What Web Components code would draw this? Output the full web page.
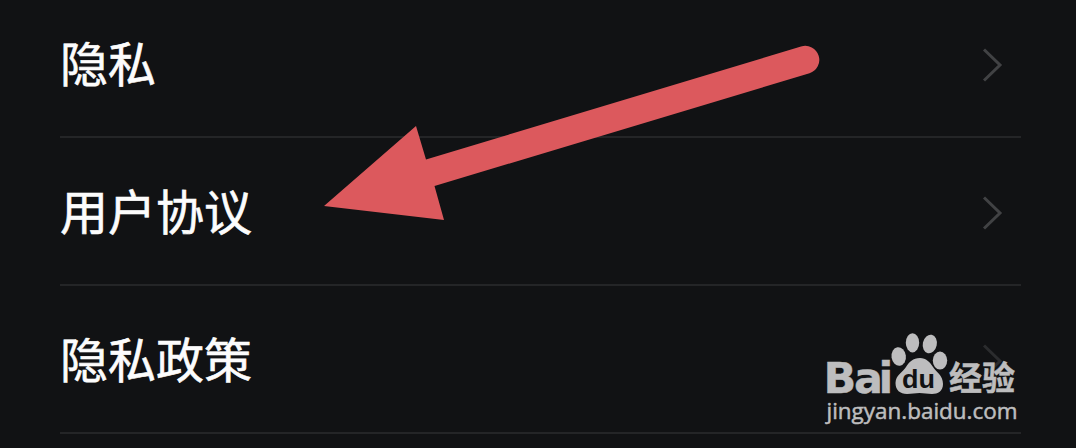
<!DOCTYPE html>
<html lang="zh-CN">
<head>
<meta charset="UTF-8">
<title>设置</title>
<style>
  body {
    margin: 0;
    background: #111214;
    overflow: hidden;
  }
</style>
</head>
<body>
<settings-page>
  <settings-row>隐私</settings-row>
  <settings-row>用户协议</settings-row>
  <settings-row class="covered">隐私政策</settings-row>
  <pointer-arrow slot="overlay"></pointer-arrow>
  <baidu-watermark slot="overlay"></baidu-watermark>
</settings-page>

<script>
class SettingsPage extends HTMLElement {
  connectedCallback() {
    this.attachShadow({ mode: 'open' });
    this.shadowRoot.innerHTML = `
      <style>
        :host {
          display: block;
          position: relative;
          box-sizing: border-box;
          width: 1076px;
          height: 448px;
          padding: 0 55px 0 60px;
          overflow: hidden;
          background: #111214;
          color: #fcfcfc;
          font-family: "Noto Sans CJK SC", sans-serif;
        }

        /* the list is scrolled a little past its first row's top */
        .list {
          display: flex;
          flex-direction: column;
          margin-top: -10px;
        }
      </style>
      <div class="list"><slot></slot></div>
      <slot name="overlay"></slot>
    `;
  }
}

class SettingsRow extends HTMLElement {
  connectedCallback() {
    this.attachShadow({ mode: 'open' });
    this.shadowRoot.innerHTML = `
      <style>
        :host {
          display: flex;
          align-items: center;
          justify-content: space-between;
          box-sizing: border-box;
          height: 148px;
          padding: 4px 17px 0 0;
          border-bottom: 2px solid #242527;
          font-size: 48px;
          line-height: 72px;
        }

        .label {
          margin-bottom: 8px;
          -webkit-text-stroke: 0.6px currentColor;
        }

        .chevron {
          display: block;
          width: 22px;
          height: 36px;
          stroke: #414244;
        }

        :host(.covered) .chevron {
          stroke: #2b2c2e;
        }
      </style>
      <span class="label"><slot></slot></span>
      <svg class="chevron" viewBox="0 0 22 36" fill="none" stroke-width="3">
        <path d="M2 2.5 L18 18 L2 33.5"/>
      </svg>
    `;
  }
}

class PointerArrow extends HTMLElement {
  connectedCallback() {
    this.attachShadow({ mode: 'open' });
    this.shadowRoot.innerHTML = `
      <style>
        :host {
          display: block;
          position: absolute;
          left: 0;
          top: 0;
        }

        svg {
          display: block;
        }
      </style>
      <svg width="1076" height="240" viewBox="0 0 1076 240">
        <path fill="#dc595d" d="M324 206 L416 126 L426 159.500 L801 46.500 A14 14 0 0 1 809.500 73.300 L434.500 186 L444 220 Z"/>
      </svg>
    `;
  }
}

class BaiduWatermark extends HTMLElement {
  connectedCallback() {
    this.attachShadow({ mode: 'open' });
    this.shadowRoot.innerHTML = `
      <style>
        :host {
          display: block;
          position: absolute;
          left: 816px;
          top: 325px;
        }

        svg {
          display: block;
        }

        .bai {
          font-family: "DejaVu Sans", sans-serif;
          font-weight: bold;
        }

        .du {
          font-family: "Liberation Sans", sans-serif;
          font-weight: bold;
        }

        .cjk {
          font-family: "Noto Sans CJK SC", sans-serif;
          font-weight: bold;
        }

        .url {
          font-family: "Open Sans", sans-serif;
        }
      </style>
      <svg width="210" height="110" viewBox="0 0 210 110" fill="#bdbdbe">
        <text class="bai" x="7.500 38 62.500" y="67.500" font-size="43" stroke="#bdbdbe" stroke-width="0.4">Bai</text>
        <!-- paw -->
        <ellipse cx="82.700" cy="31.500" rx="7.200" ry="9.300" transform="rotate(-8 82.700 31.500)"/>
        <ellipse cx="96.500" cy="17.800" rx="6.700" ry="9.600"/>
        <ellipse cx="113.800" cy="19" rx="7" ry="9.400" transform="rotate(12 113.800 19)"/>
        <ellipse cx="124" cy="35.600" rx="7.200" ry="9"/>
        <path d="M104 33 C110 33 114 37 117 42 C120 47 127 50 127 59 C127 66 122 69 116 69 C111 69 108 68 103.500 68 C99 68 96 69 91 69 C84 69 79.500 65 79.500 58 C79.500 50 87 47 90 42 C93 37 97 33 104 33 Z"/>
        <text class="du" x="86" y="63" font-size="26" fill="#111214" textLength="33" lengthAdjust="spacingAndGlyphs">du</text>
        <text class="cjk" x="133" y="65" font-size="33" textLength="66" lengthAdjust="spacingAndGlyphs" stroke="#bdbdbe" stroke-width="0.5">经验</text>
        <text class="url" x="10.500" y="93.500" font-size="21.500" textLength="191" lengthAdjust="spacingAndGlyphs" stroke="#bdbdbe" stroke-width="0.5">jingyan.baidu.com</text>
      </svg>
    `;
  }
}

customElements.define('settings-page', SettingsPage);
customElements.define('settings-row', SettingsRow);
customElements.define('pointer-arrow', PointerArrow);
customElements.define('baidu-watermark', BaiduWatermark);
</script>
</body>
</html>
